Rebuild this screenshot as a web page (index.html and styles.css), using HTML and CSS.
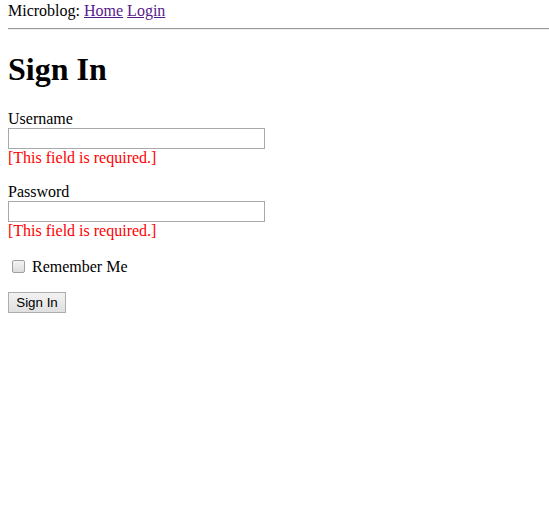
FILE: index.html
```html
<!DOCTYPE html>
<html>
<head>
<meta charset="utf-8">
<title>Sign In - Microblog</title>
<link rel="stylesheet" href="styles.css">
</head>
<body class="page">
<div class="nav">Microblog: <a class="nav-link" href="#">Home</a> <a class="nav-link" href="#">Login</a></div>
<hr class="rule">
<h1 class="title">Sign In</h1>
<form class="form" action="#" method="post" novalidate>
  <p class="field">
    <label class="label" for="username">Username</label><br>
    <input class="text-input" id="username" name="username" type="text"><br>
    <span class="error">[This field is required.]</span>
  </p>
  <p class="field">
    <label class="label" for="password">Password</label><br>
    <input class="text-input" id="password" name="password" type="password"><br>
    <span class="error">[This field is required.]</span>
  </p>
  <p class="field check-row"><input class="checkbox" id="remember_me" name="remember_me" type="checkbox"> <label class="label" for="remember_me">Remember Me</label></p>
  <p class="field"><input class="button" id="submit" name="submit" type="submit" value="Sign In"></p>
</form>
</body>
</html>
```

FILE: styles.css
```css
html { background: #fff; }
.page {
  margin: 2px 0 8px 8px;
  font-family: "Liberation Serif", "Times New Roman", serif;
  font-size: 16px;
  color: #000;
}
.nav { line-height: normal; }
.nav-link { color: #551a8b; text-decoration: underline; }
.rule {
  margin: 8px 0;
  border: 0;
  border-top: 1px solid #9a9a9a;
  border-bottom: 1px solid #eeeeee;
  height: 0;
}
.title {
  font-size: 32px;
  font-weight: bold;
  margin: 21.44px 0;
}
.form { margin: 0; }
.field { margin: 16px 0; }
.check-row { padding-top: 2px; }
.text-input {
  box-sizing: border-box;
  width: 257px;
  height: 21px;
  margin: 0;
  padding: 1px 2px;
  border: 1px solid #a9a9a9;
  background: #fff;
  font-family: "Liberation Sans", Arial, sans-serif;
  font-size: 13.33px;
  vertical-align: baseline;
}
.error { color: #ff0000; }
.checkbox {
  -webkit-appearance: none;
  appearance: none;
  box-sizing: border-box;
  width: 13px;
  height: 13px;
  margin: 0 3px 0 4px;
  border: 1px solid #a0a0a0;
  border-radius: 2px;
  background: linear-gradient(#f4f4f4, #dcdcdc);
  vertical-align: -1px;
}
.button {
  box-sizing: border-box;
  width: 58px;
  height: 21px;
  margin: 0;
  padding: 1px 6px;
  border: 1px solid #adadad;
  border-radius: 0;
  background: linear-gradient(#f2f2f2, #e0e0e0);
  font-family: "Liberation Sans", Arial, sans-serif;
  font-size: 13.33px;
  color: #000;
}
```
